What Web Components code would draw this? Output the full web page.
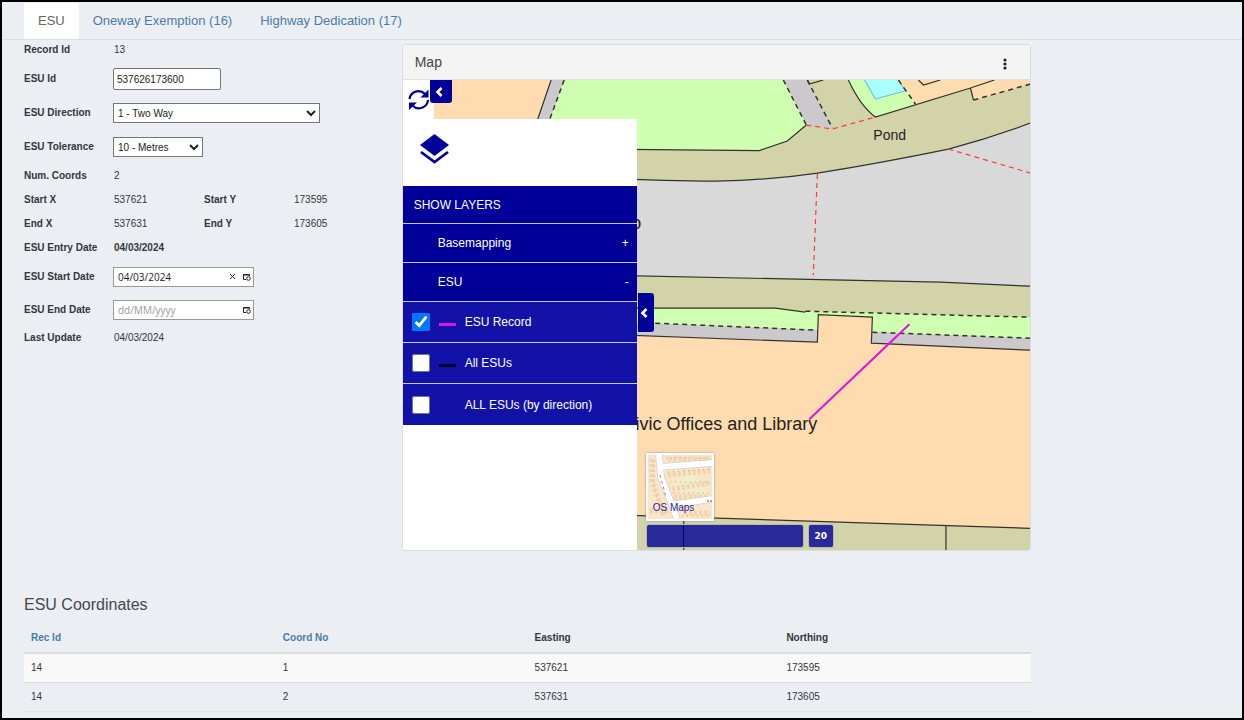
<!DOCTYPE html>
<html lang="en">
<head>
<meta charset="utf-8">
<title>ESU</title>
<style>
html, body { margin: 0; }
body {
  box-sizing: border-box;
  min-height: 100vh;
  border: 2px solid #000;
  background: #ebeff4;
  color: #33363b;
  font: 10px/14px "Liberation Sans", Arial, sans-serif;
}
</style>
</head>
<body>
<esu-page></esu-page>

<template id="tpl-page">
  <style>
    :host { display: block; }
    .content { padding: 0 17% 0 22px; }
    .columns { display: grid; grid-template-columns: 3fr 5fr; align-items: start; }
    esu-form { margin-top: -2px; }
    esu-map-panel { margin-top: 4px; }
    h2 { margin: 42px 0 7px; font-size: 16px; line-height: 24px; font-weight: normal; color: #44474c; }
  </style>
  <esu-tabs></esu-tabs>
  <main class="content">
    <div class="columns">
      <esu-form></esu-form>
      <esu-map-panel heading="Map"><esu-map></esu-map></esu-map-panel>
    </div>
    <h2>ESU Coordinates</h2>
    <esu-coordinates></esu-coordinates>
  </main>
</template>

<template id="tpl-tabs">
  <style>
    :host { display: block; }
    nav { display: flex; padding: 1px 0 0 22px; border-bottom: 1px solid #dadde3; }
    a { padding: 9px 14px 10px; font-size: 13px; line-height: 17px; color: #4a7ba8; text-decoration: none; white-space: nowrap; }
    a[aria-current] { background: #fff; color: #666; }
  </style>
  <nav>
    <a href="#esu" aria-current="page">ESU</a>
    <a href="#oneway">Oneway Exemption (16)</a>
    <a href="#highway">Highway Dedication (17)</a>
  </nav>
</template>

<template id="tpl-form">
  <style>
    :host { display: block; }
    .row { display: flex; }
    esu-field { flex: 0 0 180px; }
  </style>
  <div class="row"><esu-field label="Record Id" value="13"></esu-field></div>
  <div class="row"><esu-field label="ESU Id" kind="text" value="537626173600"></esu-field></div>
  <div class="row"><esu-field label="ESU Direction" kind="select" size="wide" value="1 - Two Way"></esu-field></div>
  <div class="row"><esu-field label="ESU Tolerance" kind="select" value="10 - Metres"></esu-field></div>
  <div class="row"><esu-field label="Num. Coords" value="2"></esu-field></div>
  <div class="row"><esu-field label="Start X" value="537621"></esu-field><esu-field label="Start Y" value="173595"></esu-field></div>
  <div class="row"><esu-field label="End X" value="537631"></esu-field><esu-field label="End Y" value="173605"></esu-field></div>
  <div class="row"><esu-field label="ESU Entry Date" value="04/03/2024" strong></esu-field></div>
  <div class="row"><esu-field label="ESU Start Date" kind="date" value="04/03/2024"></esu-field></div>
  <div class="row"><esu-field label="ESU End Date" kind="date" value=""></esu-field></div>
  <div class="row"><esu-field label="Last Update" value="04/03/2024"></esu-field></div>
</template>

<template id="tpl-field">
  <style>
    :host { display: grid; grid-template-columns: 90px max-content; align-items: center; height: 24px; }
    :host([kind]) { height: 34px; }
    :host([kind=date]) { height: 33px; }
    .label { font-weight: bold; white-space: nowrap; }
    :host([strong]) output { font-weight: bold; }
    input, select { box-sizing: border-box; font: inherit; color: #222; background: #fff; border: 1px solid #767676; border-radius: 0; margin: 0 0 0 -1px; }
    input.text { width: 108px; height: 22px; padding: 0 3px; border-radius: 2px; }
    select { width: 90px; height: 20px; padding: 0; }
    :host([size=wide]) select { width: 207px; }
    .date { box-sizing: border-box; display: flex; align-items: center; gap: 6px; width: 141px; height: 20px; margin-left: -1px; padding: 0 2px 0 4px; background: #fff; border: 1px solid #999; }
    .date input { flex: 1; min-width: 0; margin: 0; padding: 0; border: 0; outline: 0; font-family: "Open Sans", sans-serif; }
    .date input::placeholder { color: #999; opacity: 1; }
    button { display: flex; padding: 0; border: 0; background: none; color: #222; }
    svg { display: block; }
  </style>
</template>

<template id="tpl-panel">
  <style>
    :host { display: block; border: 1px solid #dcdde0; border-radius: 3px; background: #fff; overflow: hidden; }
    header { display: flex; align-items: center; justify-content: space-between; height: 34px; padding: 0 21px 0 12px; background: #f4f4f5; border-bottom: 1px solid #dedfe2; }
    h1 { margin: 0; font-size: 14px; line-height: 20px; font-weight: normal; color: #444; }
    button { display: flex; padding: 4px 2px 0; border: 0; background: none; color: #222; }
  </style>
  <header>
    <h1></h1>
    <button aria-label="Menu"><svg width="4" height="12" viewBox="0 0 4 12" fill="currentColor"><circle cx="2" cy="2" r="1.6"/><circle cx="2" cy="6" r="1.6"/><circle cx="2" cy="10" r="1.6"/></svg></button>
  </header>
  <slot></slot>
</template>

<template id="tpl-map">
  <style>
    :host { display: block; position: relative; overflow: hidden; }
    .canvas { position: absolute; inset: 0; width: 100%; height: 100%; }
    .overlay { position: relative; display: flex; flex-direction: column; align-items: flex-start; min-height: 470px; width: 234px; }
    .refresh { box-sizing: border-box; display: flex; width: 31px; height: 39px; padding: 8px 0 0 5px; border: 0; background: #fff; }
    .toggle { position: absolute; display: flex; align-items: center; justify-content: center; padding: 0; border: 0; background: #000099; }
    .top { left: 27px; top: 0; width: 22px; height: 23px; padding-right: 4px; border-radius: 0 0 3px 3px; }
    .side { left: 235px; top: 213px; width: 16px; height: 39px; padding-right: 3px; border-radius: 0 3px 3px 0; }
    esu-layers { flex: 1; align-self: stretch; }
    .tools { position: absolute; left: 243px; bottom: 2px; display: grid; gap: 3px; }
    .thumb { position: relative; box-sizing: border-box; width: 68px; height: 68px; padding: 0; border: 2px solid #fff; background: #fff; box-shadow: 0 0 2px #888; color: #22229a; font: 10px/14px "Liberation Sans", sans-serif; }
    .thumb svg { display: block; }
    .thumb span { position: absolute; left: 5px; bottom: 4px; }
    .bar { display: flex; gap: 4px; padding-left: 1px; }
    .scale, .zoom { box-sizing: border-box; height: 24px; border: 1px solid #b9bbb0; border-radius: 3px; background: #29299b; }
    .scale { width: 158px; margin-left: -1px; }
    .scale i { display: block; width: 1px; height: 22px; margin-left: 36px; background: #000055; }
    .zoom { width: 26px; color: #fff; font: bold 9px/22px "DejaVu Sans", sans-serif; text-align: center; }
  </style>
  <svg class="canvas" viewBox="403 80 627 470" preserveAspectRatio="xMinYMin slice" role="img" aria-label="Map of Civic Offices">
    <path fill="#d9d9d9" d="M403 80h900v600H403z"/>
    <path fill="#ffdcb0" d="M403 80H551L536 124V150H403z"/>
    <path fill="#ccc9cd" d="M551 80h13l-18 50h-13z"/>
    <path fill="#d2d3a9" d="M600 149L759 150.500L787 141L806 125L832 128L807 80H1030V123Q990 138 948 149Q880 163 817 173Q770 180 715 181Q670 181 600 178z"/>
    <path fill="#cfffb0" d="M564 80H783L806 125L787 141L759 150.500L546 149V130z"/>
    <path fill="#ccc9cd" d="M783 80H807L832 128L806 125z"/>
    <path fill="#cfffb0" d="M848 80Q860 106 875 117L915 104L900 80z"/>
    <path fill="#a9ffff" stroke="#6bb9d8" d="M863 78L875 99L905 91L897 78z"/>
    <path fill="#ffdcb0" d="M899 80H1030V84L973 100L970 88L915 104z"/>
    <path fill="#d2d3a9" d="M600 275Q820 277 1030 286V318L805 312L600 308z"/>
    <path fill="#cfffb0" d="M600 308H775L805 311L1030 317V339L600 321z"/>
    <path fill="#ccc9cd" d="M600 321L1030 338V350L871 343L600 336z"/>
    <path fill="#ffdcb0" d="M600 334L817 342L818 314.500L872 317L871 343L1030 350V528L600 514z"/>
    <path fill="#d2d3a9" d="M600 514L1030 528V680H600z"/>
    <g fill="none" stroke="#33332a" stroke-width="1.200">
      <path d="M551 80L537 121M600 149L759 150.500L787 141L806 125M600 178Q670 181 715 181Q770 180 817 173Q880 163 948 149Q990 138 1030 123"/>
      <path d="M848 80Q860 106 875 117L970 88L994 80M970 88L973 100M807 80L809 84L823 80M918 80L923 85L940 80"/>
      <path d="M600 275L820 279.500L940 282L1030 286M600 308H775L805 312M600 334L817 342L818 314.500L872 317L871 343L1030 350M600 514L1030 528M683.500 516V550M945.500 526V550"/>
      <path stroke-dasharray="5 4" stroke-width="1.500" d="M564 80L549 121M783 80L806 125M807 80L832 128M898 80L915 104M973 100L1030 84M805 311L1030 317M655 323L817 330M872 332L1030 338"/>
    </g>
    <path fill="none" stroke="#f04040" stroke-width="1.200" stroke-dasharray="5 4" d="M806 125L832 129L875 117M817 174L813 275M948 149L1030 173"/>
    <path stroke="#dd12dd" stroke-width="2" d="M809 419L909 324"/>
    <g fill="#22221c" font-family="Liberation Sans, sans-serif">
      <text x="873" y="140" font-size="14">Pond</text>
      <text x="817" y="430" font-size="18" text-anchor="end">Civic Offices and Library</text>
      <text x="641" y="229" font-size="18" text-anchor="end">o</text>
    </g>
  </svg>
  <div class="overlay">
    <button class="refresh" aria-label="Refresh">
      <svg width="22" height="23" viewBox="0 0 22 23" fill="none" stroke="#000099" stroke-width="2.200"><path d="M1.500 11A9 9 0 0 1 17 6M20 12A9 9 0 0 1 4.500 17.500"/><path fill="#000099" stroke="none" d="M20.500 1.500V9.500H12.500zM1 22V14.500H9z"/></svg>
    </button>
    <esu-layers></esu-layers>
    <button class="toggle top" aria-label="Collapse toolbar"><svg width="8" height="10" viewBox="0 0 8 10" fill="none" stroke="#fff" stroke-width="2.600"><path d="M6.500 1L2.500 5L6.500 9"/></svg></button>
    <button class="toggle side" aria-label="Collapse layers"><svg width="8" height="10" viewBox="0 0 8 10" fill="none" stroke="#fff" stroke-width="2.600"><path d="M6.500 1L2.500 5L6.500 9"/></svg></button>
  </div>
  <div class="tools">
    <button class="thumb">
      <svg width="64" height="64" viewBox="0 0 64 64">
        <path fill="#f8e5ca" d="M0 0h64v64H0z"/>
        <path fill="#f1edc8" d="M28 22l16-4 8 8-10 12-16-4zM46 30h12v8H46z"/>
        <g fill="none" stroke="#f3d3ae" stroke-width="5" stroke-dasharray="3 2"><path d="M20 4H62M20 20L62 16M24 34L62 28M26 42H60M4 4V26L16 60M36 58H62M2 56H24"/></g>
        <g fill="none" stroke="#b7a48f" stroke-dasharray="1 4"><path d="M18 3H62M20 17L62 14M22 27H60M25 38H62M6 6V34L14 56M34 61H62"/></g>
        <g fill="none" stroke="#c9c3bb" stroke-width="7"><path d="M11 0L13 22L22 45L29 64M12 12L64 8M22 50L64 44"/></g>
        <g fill="none" stroke="#fff" stroke-width="6"><path d="M11 0L13 22L22 45L29 64M12 12L64 8M22 50L64 44"/></g>
        <path stroke="#888" stroke-dasharray="3 3" d="M12 20L18 42"/><path stroke="#555" stroke-dasharray="2 1" d="M59 46h5"/>
      </svg>
      <span>OS Maps</span>
    </button>
    <div class="bar"><div class="scale"><i></i></div><div class="zoom">20</div></div>
  </div>
</template>

<template id="tpl-layers">
  <style>
    :host { display: block; background: #fff; color: #fff; font-size: 12px; line-height: 16px; }
    .icon { display: flex; height: 67px; box-sizing: border-box; padding: 15px 0 0 17px; }
    .head { box-sizing: border-box; display: flex; align-items: center; justify-content: space-between; width: 100%; height: 39px; margin: 0; padding: 0 8px 0 35px; border: 0; border-bottom: 1px solid #c8c8ee; background: #000099; color: #fff; font: inherit; }
    h3.head { height: 38px; padding-left: 11px; }
    label { box-sizing: border-box; display: grid; grid-template-columns: 18px 17px 1fr; column-gap: 9px; align-items: center; height: 41px; padding-left: 9px; border-bottom: 1px solid #c8c8ee; background: #1212a8; }
    label:last-child { border-bottom: 0; }
    input { width: 18px; height: 18px; margin: 0; }
    .line { height: 3px; margin-top: 4px; }
  </style>
  <div class="icon"><svg width="29" height="31" viewBox="0 0 29 31"><path fill="#000099" d="M14.500 0L29 11L14.500 22L0 11z"/><path fill="none" stroke="#000099" stroke-width="2.800" d="M1 18L14.500 28L28 18"/></svg></div>
  <h3 class="head">SHOW LAYERS</h3>
  <button class="head"><span>Basemapping</span><span>+</span></button>
  <button class="head"><span>ESU</span><span>-</span></button>
  <label><input type="checkbox" checked><i class="line" style="background:#dd12dd"></i><span class="text">ESU Record</span></label>
  <label><input type="checkbox"><i class="line" style="background:#000022"></i><span class="text">All ESUs</span></label>
  <label><input type="checkbox"><i class="line"></i><span class="text">ALL ESUs (by direction)</span></label>
</template>

<template id="tpl-coordinates">
  <style>
    :host { display: block; }
    table { width: 100%; table-layout: fixed; border-collapse: collapse; border-bottom: 1px solid #e0e3e8; }
    th, td { padding: 7px; text-align: left; }
    thead th { border-bottom: 2px solid #dadcdf; }
    tbody tr:nth-child(odd) { background: #f9f9f9; }
    tbody tr + tr td { border-top: 1px solid #dadcdf; }
    a { color: #4a7ba8; text-decoration: none; }
  </style>
  <table>
    <thead><tr><th><a href="#rec">Rec Id</a></th><th><a href="#coord">Coord No</a></th><th>Easting</th><th>Northing</th></tr></thead>
    <tbody>
      <tr><td>14</td><td>1</td><td>537621</td><td>173595</td></tr>
      <tr><td>14</td><td>2</td><td>537631</td><td>173605</td></tr>
    </tbody>
  </table>
</template>

<script>
class TemplateElement extends HTMLElement {
  constructor() {
    super();
    this.attachShadow({ mode: "open" });
    this.shadowRoot.append(document.getElementById(this.constructor.template).content.cloneNode(true));
  }
}
customElements.define("esu-layers", class extends TemplateElement { static template = "tpl-layers"; });
customElements.define("esu-map", class extends TemplateElement { static template = "tpl-map"; });
customElements.define("esu-map-panel", class extends TemplateElement {
  static template = "tpl-panel";
  connectedCallback() { this.shadowRoot.querySelector("h1").textContent = this.getAttribute("heading"); }
});
customElements.define("esu-field", class extends TemplateElement {
  static template = "tpl-field";
  connectedCallback() {
    const label = this.getAttribute("label");
    const value = this.getAttribute("value");
    const calendar = '<button aria-label="Choose date"><svg width="9" height="8" viewBox="0 0 9 8" fill="none" stroke="currentColor"><path d="M4 6.500H1.500V1.500H7.500V3M1 2H8"/><circle cx="6.500" cy="5.500" r="1.800"/></svg></button>';
    const clear = '<button aria-label="Clear"><svg width="7" height="7" viewBox="0 0 7 7" stroke="currentColor"><path d="M1 1L6 6M6 1L1 6"/></svg></button>';
    const controls = {
      text: `<input class="text" id="control" value="${value}">`,
      select: `<select id="control"><option>${value}</option></select>`,
      date: `<div class="date"><input id="control" placeholder="dd/MM/yyyy" value="${value}">${value ? clear : ""}${calendar}</div>`
    };
    const control = controls[this.getAttribute("kind")] || `<output id="control">${value}</output>`;
    this.shadowRoot.append(document.createRange().createContextualFragment(
      `<label class="label" for="control">${label}</label>${control}`));
  }
});
customElements.define("esu-form", class extends TemplateElement { static template = "tpl-form"; });
customElements.define("esu-tabs", class extends TemplateElement { static template = "tpl-tabs"; });
customElements.define("esu-coordinates", class extends TemplateElement { static template = "tpl-coordinates"; });
customElements.define("esu-page", class extends TemplateElement { static template = "tpl-page"; });
</script>
</body>
</html>
